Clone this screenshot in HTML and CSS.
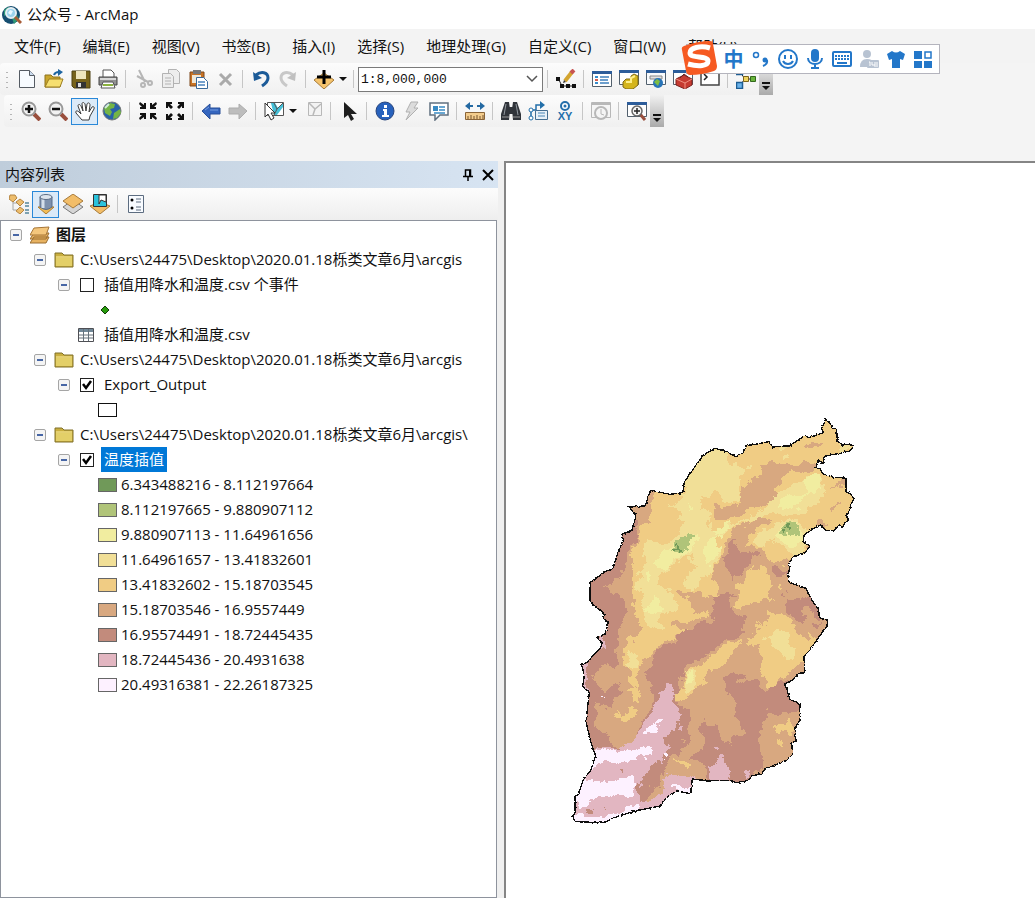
FILE: index.html
```html
<!DOCTYPE html>
<html lang="zh-CN">
<head>
    <meta charset="UTF-8">
    <meta name="viewport" content="width=device-width, initial-scale=1.0">
    <title>公众号 - ArcMap</title>
    <link rel="stylesheet" href="styles.css">
</head>
<body>
    <header class="titlebar">
        <svg class="app-icon" viewBox="0 0 20 20"><circle cx="9" cy="10" r="9" fill="#164e70"/><path d="M2 5l4-3 3 2-2 4-5 3zM10 13l5-3 2 4-5 5z" fill="#2f9a77"/><circle cx="9" cy="8" r="5" fill="#9bd3ec" stroke="#e4eef3" stroke-width="2"/><path d="M6 8l2-3 3 1-2 4z" fill="#e9f8ff"/><path d="M13 12l6 6" stroke="#a75c36" stroke-width="3"/></svg>
        <h1>公众号 - ArcMap</h1>
    </header>

    <nav class="menubar">
        <button>文件(F)</button>
        <button>编辑(E)</button>
        <button>视图(V)</button>
        <button>书签(B)</button>
        <button>插入(I)</button>
        <button>选择(S)</button>
        <button>地理处理(G)</button>
        <button>自定义(C)</button>
        <button>窗口(W)</button>
        <button>帮助(H)</button>
    </nav>

    <div class="toolbars">
        <!-- 标准工具条 -->
        <div class="toolbar">
            <span class="grip"></span>
            <button class="tool" aria-label="新建"><svg viewBox="0 0 20 20"><path d="M2.500 1.500h10l5 5v12h-15z" fill="#f7fbff" stroke="#555b63"/><path d="M12.500 1.500v5h5" fill="#cbdcef" stroke="#555b63"/></svg></button>
            <button class="tool" aria-label="打开"><svg viewBox="0 0 20 20"><path d="M1 18V6h6l2 2h7v10z" fill="#c8a52d" stroke="#8d721d"/><path d="M1 18l4-8h14l-3 8z" fill="#f6df70" stroke="#9b7d20"/><path d="M10 6c1-3 3-3 5-3" fill="none" stroke="#1d64a0" stroke-width="2"/><path d="M14 0l5 3-5 4z" fill="#1d64a0"/></svg></button>
            <button class="tool" aria-label="保存"><svg viewBox="0 0 20 20"><path d="M1 2h18v17H3l-2-2z" fill="#77631b" stroke="#4e4315"/><path d="M5 2h10v8H5z" fill="#eee5bd"/><path d="M5 13h10v6H5z" fill="#333"/><path d="M7 14h3v4H7z" fill="#ddd"/></svg></button>
            <button class="tool" aria-label="打印"><svg viewBox="0 0 20 20"><path d="M5 8V1h8l3 3v4" fill="#fff" stroke="#555"/><path d="M1 8h18v8H1z" fill="#929292" stroke="#444"/><path d="M2 9h16v2H2z" fill="#d8d8d8"/><path d="M5 13h10l2 6H3z" fill="#fff" stroke="#555"/><path d="M5 16h10" stroke="#8bb23e" stroke-width="2"/></svg></button>
            <span class="sep"></span>
            <button class="tool" aria-label="剪切"><svg viewBox="0 0 20 20" fill="none" stroke="#b6b6b6" stroke-width="2"><path d="M5 1l6 12M3 7l11 6"/><circle cx="9" cy="16" r="2"/><circle cx="16" cy="14" r="2"/></svg></button>
            <button class="tool" aria-label="复制"><svg viewBox="0 0 20 20" fill="#ededed" stroke="#b3b3b3"><path d="M7.500.5h8l3 3v11h-11z"/><path d="M1.500 4.500h8l3 3v11h-11z"/><path d="M4 9h6M4 12h6M4 15h6"/></svg></button>
            <button class="tool" aria-label="粘贴"><svg viewBox="0 0 20 20"><path d="M2 3h14v14H2z" fill="#c87324" stroke="#7c481c"/><path d="M5 1h8v4H5z" fill="#777"/><path d="M4 6h9v8H4z" fill="#efe8d8"/><path d="M8.500 8.500h7l4 4v7h-11z" fill="#fff" stroke="#39699a"/><path d="M10 13h7M10 16h7" stroke="#4a82bd" stroke-width="1.500"/></svg></button>
            <button class="tool" aria-label="删除"><svg viewBox="0 0 20 20"><path d="M5 5l11 11M16 5L5 16" stroke="#aaa" stroke-width="3"/></svg></button>
            <span class="sep"></span>
            <button class="tool" aria-label="撤消"><svg viewBox="0 0 20 20"><path d="M5 6c5-4 12-3 12 3 0 4-3 6-6 8" fill="none" stroke="#1c5b98" stroke-width="3"/><path d="M2 3l1 9 8-3z" fill="#1c5b98"/></svg></button>
            <button class="tool" aria-label="恢复"><svg viewBox="0 0 20 20"><path d="M15 6C10 2 3 3 3 9c0 4 3 6 6 8" fill="none" stroke="#c8c8c8" stroke-width="3"/><path d="M18 3l-1 9-8-3z" fill="#c0c0c0"/></svg></button>
            <span class="sep"></span>
            <button class="tool" aria-label="添加数据"><svg viewBox="0 0 20 20"><path d="M0 11l10-7 10 7-10 9z" fill="#f5c36c" stroke="#a67b3a"/><path d="M10 1v14M3 8h14" stroke="#000" stroke-width="3"/></svg></button>
            <button class="drop" aria-label="添加数据选项"></button>
            <span class="sep"></span>
            <select class="scale" aria-label="比例尺">
                <option>1:8,000,000</option>
            </select>
            <span class="sep"></span>
            <button class="tool" aria-label="编辑器"><svg viewBox="0 0 20 20"><path d="M2 9l4 8h12" fill="none" stroke="#222"/><path d="M0 8h4v4H0zM4 15h4v4H4zM10 15h4v4h-4zM16 15h4v4h-4z" fill="#111"/><path d="M9 12l7-9" stroke="#d3a42f" stroke-width="4"/><path d="M15 4l3-3" stroke="#c85453" stroke-width="4"/><path d="M7 14l1-3 2 2z" fill="#333"/></svg></button>
            <span class="sep"></span>
            <button class="tool" aria-label="内容列表窗口"><svg viewBox="0 0 20 20"><path d="M.5 2.500h19v15H.5z" fill="#fff" stroke="#52606d"/><path d="M0 2h20v3H0z" fill="#2d5d9a"/><path d="M3 8h3M3 14h3" stroke="#378dcc" stroke-width="2"/><path d="M3 11h3" stroke="#d65d49" stroke-width="2"/><path d="M8 8h9M8 11h8M8 14h9" stroke="#3e80bd" stroke-width="1.500"/></svg></button>
            <button class="tool" aria-label="目录"><svg viewBox="0 0 20 20"><path d="M.5 1.500h19v14H.5z" fill="#fff" stroke="#52606d"/><path d="M0 1h20v3H0z" fill="#2d5d9a"/><path d="M4 13l3-3h5V7l3-2 4 2v9l-5 4H7l-3-2z" fill="#d4b51d" stroke="#806b16"/><path d="M7 13h5V9l4-2" fill="none" stroke="#fff08a" stroke-width="2"/></svg></button>
            <button class="tool" aria-label="搜索"><svg viewBox="0 0 20 20"><path d="M.5 1.500h19v14H.5z" fill="#f8fafc" stroke="#52606d"/><path d="M0 1h20v3H0z" fill="#2d5d9a"/><path d="M4 7h12v3H4z" fill="#e2e2e2" stroke="#888"/><circle cx="12" cy="14" r="5" fill="#2774b8"/><path d="M8 13l3-3 3 2-2 5z" fill="#7fbd43"/></svg></button>
            <button class="tool" aria-label="ArcToolbox"><svg viewBox="0 0 20 20"><path d="M.5 1.500h19v14H.5z" fill="#fff" stroke="#52606d"/><path d="M0 1h20v3H0z" fill="#2d5d9a"/><path d="M3 10l8-4 8 4v6l-7 4-9-4z" fill="#c63b31" stroke="#7d211c"/><path d="M3 10l9 4 7-4M12 14v6" fill="none" stroke="#ef9282"/><path d="M7 9l4-4 4 3" fill="none" stroke="#622"/></svg></button>
            <button class="tool" aria-label="Python"><svg viewBox="0 0 20 20"><path d="M1 2h18v14H1z" fill="#fff" stroke="#444" stroke-width="1.500"/><path d="M4 5l3 3-3 3" fill="none" stroke="#222" stroke-width="1.500"/></svg></button>
            <span class="sep"></span>
            <button class="tool" aria-label="模型构建器"><svg viewBox="0 0 20 20"><path d="M4 3l5 7-5 6M10 10h8" fill="none" stroke="#222"/><path d="M.5.5h6v5h-6zM.5 13.500h6v6h-6z" fill="#6ab2ea" stroke="#1d5d93" stroke-width="1.500"/><path d="M7.500 7.500h5v5h-5z" fill="#efd35d" stroke="#7b641b"/><path d="M14.500 7.500h5v5h-5z" fill="#69b43c" stroke="#33681c"/></svg></button>
            <button class="overflow" aria-label="工具条选项"></button>
        </div>

        <!-- 工具 -->
        <div class="toolbar tools">
            <span class="grip"></span>
            <button class="tool" aria-label="放大"><svg viewBox="0 0 20 20"><path d="M13 13l6 6" stroke="#9a4f3d" stroke-width="4"/><circle cx="8" cy="8" r="6.500" fill="#f2f2f2" stroke="#999" stroke-width="2"/><path d="M8 4v8M4 8h8" stroke="#111" stroke-width="2.500"/></svg></button>
            <button class="tool" aria-label="缩小"><svg viewBox="0 0 20 20"><path d="M13 13l6 6" stroke="#9a4f3d" stroke-width="4"/><circle cx="8" cy="8" r="6.500" fill="#f2f2f2" stroke="#999" stroke-width="2"/><path d="M4 8h8" stroke="#111" stroke-width="2.500"/></svg></button>
            <button class="tool active" aria-label="平移"><svg viewBox="0 0 20 20"><path d="M7 19L1 12c-1-2 1-3 3-1l2 2-3-8c0-2 2-2 3 0l2 5-1-7c0-2 2-2 3 0l1 7 1-7c1-2 3-1 3 1l-1 7 3-5c1-1 3 0 2 2l-4 7-1 4z" fill="#fff" stroke="#3c3c3c"/></svg></button>
            <button class="tool" aria-label="全图"><svg viewBox="0 0 20 20"><circle cx="10" cy="10" r="9" fill="#2861a8" stroke="#777"/><path d="M2 7l6-5 5 1-1 4-4 1 2 3-2 4-5-3zM12 12l6-4 1 4-4 5-4 1z" fill="#74b445"/><path d="M3 7l4-4" stroke="#d4efd8" stroke-width="2"/></svg></button>
            <span class="sep"></span>
            <button class="tool" aria-label="固定比例放大"><svg viewBox="0 0 20 20" fill="#111"><path d="M2 1l4 3V2h2v6H2V6h2L1 3zM18 1l-4 3V2h-2v6h6V6h-2l3-3zM2 19l4-3v2h2v-6H2v2h2l-3 3zM18 19l-4-3v2h-2v-6h6v2h-2l3 3z"/></svg></button>
            <button class="tool" aria-label="固定比例缩小"><svg viewBox="0 0 20 20" fill="#111"><path d="M1 1h6v2H5l3 3-2 2-3-3v2H1zM19 1h-6v2h2l-3 3 2 2 3-3v2h2zM1 19h6v-2H5l3-3-2-2-3 3v-2H1zM19 19h-6v-2h2l-3-3 2-2 3 3v-2h2z"/></svg></button>
            <span class="sep"></span>
            <button class="tool" aria-label="返回"><svg viewBox="0 0 20 20"><path d="M1 10l8-7v4h10v6H9v5z" fill="#3566bf" stroke="#284e98"/><path d="M4 9l4-3M9 9h8" stroke="#759bdf"/></svg></button>
            <button class="tool" aria-label="前进"><svg viewBox="0 0 20 20"><path d="M19 10l-8-7v4H1v6h10v5z" fill="#bdbdbd" stroke="#adadad"/></svg></button>
            <span class="sep"></span>
            <button class="tool" aria-label="选择要素"><svg viewBox="0 0 20 20"><path d="M3.500 1.500h16v13h-16z" fill="#fff" stroke="#555"/><path d="M7 2h4l3 5 5-5v4l-6 8h-3z" fill="#44bfd7"/><path d="M10 2l3 6 6-6M13 8l-3 6" fill="none" stroke="#555"/><path d="M1 2v14l3-3 3 6 3-2-3-5h4z" fill="#fff" stroke="#333"/></svg></button>
            <button class="drop" aria-label="选择要素选项"></button>
            <button class="tool" aria-label="清除所选要素"><svg viewBox="0 0 20 20"><path d="M5.500 1.500h13v13h-13z" fill="#f3f3f3" stroke="#b8b8b8"/><path d="M6 2l6 6 6-5M12 8l-2 6" fill="none" stroke="#b8b8b8" stroke-width="1.500"/></svg></button>
            <span class="sep"></span>
            <button class="tool" aria-label="选择元素"><svg viewBox="0 0 20 20"><path d="M5 1v16l4-3 3 6 3-2-3-5h6z" fill="#1e1e1e"/></svg></button>
            <span class="sep"></span>
            <button class="tool" aria-label="识别"><svg viewBox="0 0 20 20"><circle cx="10" cy="10" r="9" fill="#2761bc" stroke="#28457d"/><path d="M9 4h3v3H9zM8 8h4v6h2v2H7v-2h2v-4H8z" fill="#fff"/></svg></button>
            <button class="tool" aria-label="超链接"><svg viewBox="0 0 20 20"><path d="M9 1h7l-4 6h4L4 19l4-8H4z" fill="#dcdcdc" stroke="#b0b0b0"/></svg></button>
            <button class="tool" aria-label="HTML 弹出窗口"><svg viewBox="0 0 20 20"><path d="M1 2h18v12h-8l-5 5v-5H1z" fill="#fff" stroke="#607080" stroke-width="1.500"/><path d="M4 5h5v5H4z" fill="#398ac3"/><path d="M10 6h6M10 9h6M5 12h11" stroke="#398ac3" stroke-width="1.500"/></svg></button>
            <span class="sep"></span>
            <button class="tool" aria-label="测量"><svg viewBox="0 0 20 20"><path d="M0 5l5-4v3h10V1l5 4-5 4V6H5v3z" fill="#2469a2"/><path d="M8 3h4v4H8z" fill="#f7f7f7"/><path d="M.5 11.500h19v7H.5z" fill="#f3cc8c" stroke="#8a6437"/><path d="M3 15v3M6 14v4M9 15v3M12 14v4M15 15v3M18 14v4" stroke="#75532d"/></svg></button>
            <span class="sep"></span>
            <button class="tool" aria-label="查找"><svg viewBox="0 0 20 20"><path d="M4 1h4l1 7-1 11H0v-6zM12 1h4l4 12v6h-8L11 8zM7 6h6v7H7z" fill="#30343a"/><path d="M5 3L3 14M15 3l2 11" stroke="#9299a0"/><path d="M1 16h7M12 16h7" stroke="#999"/></svg></button>
            <button class="tool" aria-label="查找路径"><svg viewBox="0 0 20 20"><path d="M3 17V9h5V4h6" fill="none" stroke="#236fa9" stroke-width="1.500"/><path d="M12 0l5 4-5 4z" fill="#236fa9"/><circle cx="3" cy="9" r="2" fill="#fff" stroke="#236fa9"/><circle cx="3" cy="17" r="2" fill="#fff" stroke="#236fa9"/><path d="M7.500 9.500h12v9h-12z" fill="#e8f0f7" stroke="#446d91"/><path d="M10 12h7M10 15h7" stroke="#4b86b6"/></svg></button>
            <button class="tool" aria-label="转到 XY"><svg viewBox="0 0 20 20"><circle cx="10" cy="5" r="4" fill="#fff" stroke="#246fab" stroke-width="2"/><circle cx="10" cy="5" r="1.500" fill="#246fab"/><text class="xy" x="10" y="19" text-anchor="middle">XY</text></svg></button>
            <span class="sep"></span>
            <button class="tool" aria-label="时间滑块"><svg viewBox="0 0 20 20" fill="#f5f5f5" stroke="#b8b8b8"><path d="M.5 1.500h19v15H.5z"/><path d="M1 3h18" stroke-width="2"/><circle cx="10" cy="12" r="6" stroke-width="2"/><path d="M10 8v5l3 1" fill="none"/></svg></button>
            <span class="sep"></span>
            <button class="tool" aria-label="查看器窗口"><svg viewBox="0 0 20 20"><path d="M.5 1.500h19v14H.5z" fill="#fff" stroke="#52606d"/><path d="M0 1h20v3H0z" fill="#2d5d9a"/><path d="M13 13l5 6" stroke="#9a4f3d" stroke-width="3"/><circle cx="10" cy="10" r="5" fill="#f5f5f5" stroke="#666" stroke-width="1.500"/><path d="M10 7v6M7 10h6" stroke="#222" stroke-width="1.500"/></svg></button>
            <button class="overflow" aria-label="工具条选项"></button>
        </div>

        <!-- 输入法状态栏 -->
        <div class="ime">
            <svg class="ime-logo" viewBox="0 0 36 36"><path d="M3 6Q17 1 29 1q3 0 3 3l4 22q0 4-3 5Q21 35 9 35q-3 0-4-4L1 10q-1-3 2-4z" fill="#f65a22"/><path d="M29 8C19 5 9 8 9 13c0 6 18 2 18 8 0 5-9 6-20 3" fill="none" stroke="#fff" stroke-width="5"/></svg>
            <button class="lang">中</button>
            <button aria-label="标点"><svg viewBox="0 0 20 20"><circle cx="5" cy="6" r="2.500" fill="none" stroke="#2377c9" stroke-width="1.500"/><circle cx="14" cy="11" r="2.500" fill="#2377c9"/><path d="M16 11q1 4-4 6" fill="none" stroke="#2377c9" stroke-width="2"/></svg></button>
            <button aria-label="表情"><svg viewBox="0 0 20 20" fill="none" stroke="#2377c9" stroke-width="2"><circle cx="10" cy="10" r="9"/><path d="M7 6v4M13 6v4M5 12c2 4 8 4 10 0"/></svg></button>
            <button aria-label="语音"><svg viewBox="0 0 20 20"><rect x="6" y="0" width="8" height="13" rx="4" fill="#2377c9"/><path d="M3 9c0 8 14 8 14 0M10 15v4M6 19h8" fill="none" stroke="#2377c9" stroke-width="2"/></svg></button>
            <button aria-label="键盘"><svg viewBox="0 0 20 20"><rect x="1" y="3" width="18" height="14" rx="1" fill="#fff" stroke="#2377c9" stroke-width="2"/><path d="M3 7h14M3 10h14" stroke="#2377c9" stroke-width="2" stroke-dasharray="2 1"/><path d="M5 14h10" stroke="#2377c9" stroke-width="2"/></svg></button>
            <button aria-label="账户"><svg viewBox="0 0 20 20"><circle cx="8" cy="5" r="4" fill="#b8c3d2"/><path d="M1 18q0-8 7-8 5 0 6 3v5z" fill="#b8c3d2"/><rect x="8" y="11" width="12" height="8" rx="1" fill="#b8c3d2"/><path d="M10 13h1v4M13 13v3h3v-3M16 16v2M18 13v5" fill="none" stroke="#fff"/></svg></button>
            <button aria-label="皮肤"><svg viewBox="0 0 20 20"><path d="M6 2q4 3 8 0l5 3-2 6-3-1v9H6v-9l-3 1-2-6z" fill="#2377c9"/></svg></button>
            <button aria-label="工具箱"><svg viewBox="0 0 20 20"><path d="M1 2h8v8H1zM1 12h8v7H1zM11 12h8v7h-8z" fill="#2377c9"/><path d="M12 3h6v6h-6z" fill="#fff" stroke="#2377c9" stroke-width="1.500"/></svg></button>
        </div>
    </div>

    <div class="workspace">
        <aside class="toc">
            <div class="toc-header">
                <h2>内容列表</h2>
                <button aria-label="自动隐藏"><svg viewBox="0 0 12 12"><path d="M3.500 7V1h5v6M1 7.500h10M6 8v4" fill="none" stroke="#000" stroke-width="1.500"/><path d="M7 1h2v6H7z"/></svg></button>
                <button aria-label="关闭"><svg viewBox="0 0 12 12"><path d="M1 1l10 10M11 1L1 11" stroke="#000" stroke-width="2"/></svg></button>
            </div>
            <div class="toc-toolbar">
                <button class="tool" aria-label="按绘制顺序列出"><svg viewBox="0 0 20 20"><path d="M4 6v10h7M4 9h7" fill="none" stroke="#a6a6a6"/><path d="M1 1h5l2 3-4 4-4-3zM11 5l4 3-4 4-4-4zM11 13l4 3-4 4-4-3z" fill="#edbd6c" stroke="#b68642"/><path d="M16 9h4M16 12h4M16 16h4M16 19h4" stroke="#55869c" stroke-width="1.500"/></svg></button>
                <button class="tool active" aria-label="按源列出"><svg viewBox="0 0 20 20"><path d="M2 13h16l-8 7z" fill="#f1bd58" stroke="#ad7c30"/><path d="M4 3v10q6 5 12 0V3z" fill="#7e91ad" stroke="#5b6d86"/><path d="M7 4v10" stroke="#d5dfeb" stroke-width="3"/><ellipse cx="10" cy="3" rx="6" ry="2.500" fill="#dce4ed" stroke="#5b6d86"/></svg></button>
                <button class="tool" aria-label="按可见性列出"><svg viewBox="0 0 20 20"><path d="M0 13l10-7 10 7-10 7z" fill="#d5d5d5" stroke="#777"/><path d="M0 7l10-7 10 7-10 7z" fill="#f2bd68" stroke="#a67a3a"/></svg></button>
                <button class="tool" aria-label="按选择列出"><svg viewBox="0 0 20 20"><path d="M0 12l10-4 10 4-10 8z" fill="#f2bd68" stroke="#a67a3a"/><path d="M3.500.5h13v12h-13z" fill="#2bc3dc" stroke="#333"/><path d="M9 1h7v7l-5-2-2 4z" fill="#fff" stroke="#333"/></svg></button>
                <span class="sep"></span>
                <button class="tool" aria-label="选项"><svg viewBox="0 0 20 20"><path d="M2.500 1.500h15v17h-15z" fill="#f8fbff" stroke="#5c6c80"/><circle cx="6" cy="6" r="1.500"/><circle cx="6" cy="14" r="1.500"/><path d="M10 5h5M10 8h5M10 13h5M10 16h5" stroke="#5c6c80"/></svg></button>
            </div>

            <ul class="tree">
                <li>
                    <div class="row">
                        <button class="toggle" aria-label="折叠"></button>
                        <svg class="node-icon" viewBox="0 0 20 18"><path d="M4 11h15l-3 6H0zM4 7h15l-3 6H0z" fill="#e7b261" stroke="#9a6d31"/><path d="M4 2l15-1-3 8H0z" fill="#f4c67c" stroke="#a67536"/></svg>
                        <strong>图层</strong>
                    </div>
                    <ul>
                        <li>
                            <div class="row">
                                <button class="toggle" aria-label="折叠"></button>
                                <svg class="node-icon" viewBox="0 0 20 18"><path d="M1 16V2h7l2 2h9v12z" fill="#c9ae3f" stroke="#80702a"/><path d="M2 7h16v8H2z" fill="#e3cf68"/><path d="M2 6h16" stroke="#fff1a5"/></svg>
                                <span>C:\Users\24475\Desktop\2020.01.18栎类文章6月\arcgis</span>
                            </div>
                            <ul>
                                <li>
                                    <div class="row">
                                        <button class="toggle" aria-label="折叠"></button>
                                        <input type="checkbox" id="events">
                                        <label for="events">插值用降水和温度.csv 个事件</label>
                                    </div>
                                    <div class="row symbol"><svg class="point" viewBox="0 0 14 14"><path d="M7 3l4 4-4 4-4-4z" fill="#279b0b" stroke="#123b08"/></svg></div>
                                </li>
                                <li>
                                    <div class="row table-row">
                                        <svg class="table-icon" viewBox="0 0 16 14"><path d="M.5.5h15v13H.5z" fill="#fff" stroke="#4e4f54"/><path d="M1 1h14v3H1z" fill="#6f8797"/><path d="M1 7h14M1 10h14M5.500 1v12M10.500 1v12" stroke="#65717b"/></svg>
                                        <span>插值用降水和温度.csv</span>
                                    </div>
                                </li>
                            </ul>
                        </li>
                        <li>
                            <div class="row">
                                <button class="toggle" aria-label="折叠"></button>
                                <svg class="node-icon" viewBox="0 0 20 18"><path d="M1 16V2h7l2 2h9v12z" fill="#c9ae3f" stroke="#80702a"/><path d="M2 7h16v8H2z" fill="#e3cf68"/><path d="M2 6h16" stroke="#fff1a5"/></svg>
                                <span>C:\Users\24475\Desktop\2020.01.18栎类文章6月\arcgis</span>
                            </div>
                            <ul>
                                <li>
                                    <div class="row">
                                        <button class="toggle" aria-label="折叠"></button>
                                        <input type="checkbox" id="export" checked>
                                        <label for="export">Export_Output</label>
                                    </div>
                                    <div class="row symbol"><span class="swatch outline"></span></div>
                                </li>
                            </ul>
                        </li>
                        <li>
                            <div class="row">
                                <button class="toggle" aria-label="折叠"></button>
                                <svg class="node-icon" viewBox="0 0 20 18"><path d="M1 16V2h7l2 2h9v12z" fill="#c9ae3f" stroke="#80702a"/><path d="M2 7h16v8H2z" fill="#e3cf68"/><path d="M2 6h16" stroke="#fff1a5"/></svg>
                                <span>C:\Users\24475\Desktop\2020.01.18栎类文章6月\arcgis\</span>
                            </div>
                            <ul>
                                <li>
                                    <div class="row">
                                        <button class="toggle" aria-label="折叠"></button>
                                        <input type="checkbox" id="temperature" checked>
                                        <label for="temperature" class="selected">温度插值</label>
                                    </div>
                                    <div class="row symbol"><span class="swatch t1"></span>6.343488216 - 8.112197664</div>
                                    <div class="row symbol"><span class="swatch t2"></span>8.112197665 - 9.880907112</div>
                                    <div class="row symbol"><span class="swatch t3"></span>9.880907113 - 11.64961656</div>
                                    <div class="row symbol"><span class="swatch t4"></span>11.64961657 - 13.41832601</div>
                                    <div class="row symbol"><span class="swatch t5"></span>13.41832602 - 15.18703545</div>
                                    <div class="row symbol"><span class="swatch t6"></span>15.18703546 - 16.9557449</div>
                                    <div class="row symbol"><span class="swatch t7"></span>16.95574491 - 18.72445435</div>
                                    <div class="row symbol"><span class="swatch t8"></span>18.72445436 - 20.4931638</div>
                                    <div class="row symbol"><span class="swatch t9"></span>20.49316381 - 22.26187325</div>
                                </li>
                            </ul>
                        </li>
                    </ul>
                </li>
            </ul>
        </aside>

        <main class="map-view">
            <svg class="map" viewBox="0 0 930 1290" shape-rendering="crispEdges">
                <defs>
                    <filter id="rough" x="-5%" y="-5%" width="110%" height="110%">
                        <feTurbulence type="fractalNoise" baseFrequency="0.12" numOctaves="2" seed="4" result="noise"/>
                        <feDisplacementMap in="SourceGraphic" in2="noise" scale="8" xChannelSelector="R" yChannelSelector="G"/>
                    </filter>
                    <filter id="wavy" x="0" y="0" width="100%" height="100%">
                        <feTurbulence type="fractalNoise" baseFrequency="0.025" numOctaves="3" seed="9" result="noise"/>
                        <feDisplacementMap in="SourceGraphic" in2="noise" scale="50" xChannelSelector="R" yChannelSelector="G"/>
                    </filter>
                    <path id="border" d="M797 55L815 72 818 82 830 85 832 120 845 132 872 130 881 136 868 150 835 158 793 166 790 187 775 177 768 198 761 200 780 203 788 218 818 228 858 232 858 272 870 278 882 292 872 312 866 335 858 344 866 357 854 366 848 380 838 372 822 388 797 388 783 372 755 386 732 402 730 425 746 432 748 437 735 455 700 468 685 490 690 505 683 520 688 545 738 562 752 592 775 625 778 650 803 658 800 678 775 710 752 745 732 765 734 815 715 818 700 835 672 850 684 866 675 850 690 895 720 910 718 960 705 980 708 1020 695 1025 698 1060 680 1078 650 1090 615 1103 605 1118 575 1125 565 1138 530 1145 510 1138 440 1140 397 1133 392 1178 350 1170 320 1188 300 1215 235 1228 175 1245 130 1265 45 1262 38 1245 45 1235 45 1187 55 1180 70 1135 92 1108 107 1065 90 1015 78 960 88 875 68 855 72 830 68 800 62 790 80 785 122 740 126 726 112 710 135 700 145 665 128 650 136 640 90 603 90 545 100 538 138 510 158 505 172 460 190 415 185 400 215 388 228 345 208 318 255 315 272 268 330 280 368 275 375 240 430 162 465 142 500 152 528 168 548 158 558 135 627 122 638 138 690 134 735 103 745 110 790 95 785 82Z"/>
                    <clipPath id="inside"><use href="#border"/></clipPath>
                </defs>
                <g filter="url(#rough)">
                    <g clip-path="url(#inside)">
                        <g filter="url(#wavy)">
                            <path fill="#d8a880" d="M-50-50h1030v1400H-50z"/>
                            <g fill="#f0cc84">
                                <path d="M285 280L262 350 275 365 235 400 220 460 215 560 222 640 250 680 200 720 190 780 205 840 225 865 240 800 290 740 330 710 395 690 345 680 335 655 380 662 450 645 455 625 400 638 380 600 345 575 350 570 420 585 480 580 460 510 480 470 490 430 525 385 600 350 635 355 560 400 550 430 600 445 610 460 640 490 700 470 760 440 740 400 930 400 930 0 380 0z"/>
                                <path d="M605 495L620 520 640 605 610 600 520 615 530 545 570 510zM630 630L670 640 700 690 775 715 740 780 700 790 660 830 640 865 620 850 600 790 600 740 560 720 575 690 620 665zM500 730L545 720 510 770 480 800 430 845 405 870 350 915 340 890 365 850 365 810 440 780z"/>
                                <path d="M655 965L695 960 705 985 670 1000 650 990zM645 1015L670 1010 670 1035 650 1030zM625 840h25l-8 24-18-8zM155 560l10 2-2 12-12-8zM665 546h10v10h-10z"/>
                            </g>
                            <g fill="#f1df97">
                                <path d="M420 165L465 130 510 165 515 190 570 205 530 265 520 300 490 305 475 265 430 290 435 350 470 390 520 370 600 330 640 280 730 240 760 215 800 260 780 290 730 340 640 335 540 370 480 410 480 450 460 500 430 550 400 575 375 560 370 530 400 490 395 450 320 510 290 520 290 550 320 565 345 600 340 630 310 640 300 690 280 680 255 640 240 570 225 540 260 500 255 430 265 410 300 430 360 400 365 350 330 310 380 270 365 245z"/>
                                <path d="M570 415L650 365 700 350 750 380 740 440 700 460 650 430 600 435zM640 690L690 695 700 760 680 775 640 730 615 715zM210 740L240 765 225 800 200 785zM370 805L405 805 410 860 375 880 368 850zM830 130L900 136 830 165zM665 140l25-8-5 25-22 8z"/>
                            </g>
                            <g fill="#f1eda0">
                                <path d="M740 230L770 215 780 260 735 290 715 325 650 320 680 285 735 285zM345 430L410 395 430 410 395 440 320 500 280 505 300 470zM435 440L480 405 480 445 435 490zM665 375L715 360 735 385 730 430 680 430 650 410zM285 590L310 600 315 630 280 640 255 620zM370 820L395 810 405 835 375 850zM260 515l15 3-5 20-12-5zM470 385l45-20-10 30-25 10zM385 310l12 5-6 14z"/>
                            </g>
                            <path fill="#b0c479" d="M345 430L380 408 408 400 405 415 360 455 342 460zM675 370L720 362 722 400 690 405 665 390z"/>
                            <path fill="#709959" d="M347 443l20-4-5 14-16 4zM670 385l15-12 12 7-12 10z"/>
                            <g fill="#d8a880">
                                <path d="M640 172L690 190 760 190 790 170 780 205 700 210 650 240 640 260 655 285 610 310 520 345 500 360 450 345 455 320 520 315 530 275 600 215 610 190zM725 135L785 118 770 135 740 148 722 140zM815 245L868 233 868 255zM808 308L838 306 830 316 810 316zM770 370L785 360 815 380 800 395z"/>
                            </g>
                            <g fill="#c28b7c">
                                <path d="M235 350L232 400 215 450 195 500 130 560 190 590 195 640 170 690 175 760 170 800 120 800 95 830 130 870 180 850 185 890 150 910 110 930 105 970 145 1000 150 1030 205 1040 250 960 280 890 265 820 290 750 360 705 460 650 470 580 510 580 510 620 560 650 540 700 440 760 365 800 355 850 350 910 395 930 380 1000 365 1050 330 1090 280 1160 240 1195 150 1120 0 1100 0 400z"/>
                                <path d="M490 480L510 420 525 415 530 450 600 465 570 495 520 530 500 500zM635 505L690 500 690 520 650 525zM680 590L735 580 765 605 785 650 740 630 720 670 690 650 675 620zM750 660L780 655 775 680zM665 570l12-3 3 12-10 3z"/>
                                <path d="M500 810L560 810 555 835 595 840 620 870 665 840 690 840 740 910 710 930 630 930 610 950 600 990 605 1010 600 1060 620 1100 530 1170 450 1150 400 1070 430 1030 420 950 460 980 520 1040 525 1000 560 1000 530 960 520 940 540 905 500 880z"/>
                            </g>
                            <path fill="#d8a880" d="M150 555l40-30 20 10-10 45-40 5-30-15zM110 810l25-15 30 20 40-20 10 35-40-5-30 30-30-15zM185 670l25-20 30 20-10 50-40-20zM530 840l30-10-10 30zM100 920l50-5 40-40 70 15-20 60-30 70-30 20-35-20 5-30-50-15z"/>
                            <path fill="#f0cc84" d="M175 930l45-5 2 22-22 15-30-5zM215 865l25 10 5 20-20 10-10-15z"/>
                            <g fill="#e2b6c1">
                                <path d="M315 845L340 870 345 915 362 940 350 1000 300 1010 345 1025 330 1065 280 1090 240 1150 240 1190 290 1190 320 1120 415 1120 415 1200 300 1245 10 1300 10 1180 110 1045 180 1045 230 1000 270 940 300 860zM475 1045L490 1050 510 1130 480 1150 460 1115 440 1100 470 1080zM550 1100L580 1105 560 1148zM105 710h22v30h-22zM60 790h17l5 70H60z"/>
                            </g>
                            <path fill="#c28b7c" d="M295 1010l60-5 12 20-15 25-70 110-40 45-5-20 30-60 50-65 20-30z"/>
                            <path fill="#d8a880" d="M385 1075l25 15 40 40-30 8-100-20-5-25 35-30z"/>
                            <path fill="#f0cc84" d="M345 1080l28 0 18 22-10 6z"/>
                            <g fill="#fdf1ff">
                                <path d="M100 1055L190 1050 270 1035 275 1060 200 1085 130 1090 80 1110zM50 1135L110 1145 235 1125 240 1145 220 1172 150 1190 100 1190 50 1220 30 1190zM255 990L270 970 297 960 290 985 260 1002zM335 1147L360 1152 405 1158 400 1190 340 1175zM20 1240L130 1250 190 1220 240 1215 240 1240 130 1290 20 1290zM130 887h8v8h-8zM313 1068h6v6h-6z"/>
                            </g>
                            <path fill="#c28b7c" d="M75 1220l35-4-3 16-30 3zM134 1218h10v4h-10zM177 1108h6v4h-6z"/>
                        </g>
                    </g>
                    <use href="#border" fill="none" stroke="#080808" stroke-width="4"/>
                </g>
            </svg>
        </main>
    </div>
</body>
</html>
```

FILE: styles.css
```css
* {
    margin: 0;
    padding: 0;
    box-sizing: border-box;
}

body {
    font-family: 'Open Sans', 'Noto Sans CJK SC', sans-serif;
    font-size: 15px;
    line-height: 25px;
    color: #111;
    background-color: #f0f0f0;
    min-height: 100vh;
    display: flex;
    flex-direction: column;
}

button {
    font: inherit;
    color: inherit;
    background: none;
    border: none;
}

svg {
    display: block;
}

ul {
    list-style: none;
}

.titlebar {
    height: 29px;
    padding: 0 2px;
    background-color: #fff;
    display: flex;
    align-items: center;
    gap: 5px;
}

.titlebar h1 {
    font-size: 15px;
    font-weight: normal;
}

.app-icon {
    width: 20px;
    height: 20px;
}

.menubar {
    height: 34px;
    padding: 0 14px;
    background-color: #f3f3f3;
    display: flex;
    align-items: center;
    gap: 22px;
    white-space: nowrap;
}

.toolbars {
    position: relative;
    height: 98px;
    background-color: #f4f4f4;
}

.toolbar {
    width: max-content;
    height: 32px;
    padding-left: 4px;
    border-radius: 4px 0 0 4px;
    background: linear-gradient(#fcfcfc, #f0f0f0);
    display: flex;
    align-items: center;
}

.toolbar.tools {
    margin-left: 4px;
}

.grip {
    width: 9px;
    height: 18px;
    background: radial-gradient(circle, #b5b5b5 1px, transparent 1px) 0 0 / 6px 5px repeat-y;
}

.tool {
    width: 27px;
    height: 27px;
    padding: 3px;
    flex: none;
    display: flex;
    align-items: center;
    justify-content: center;
}

.tool svg {
    width: 20px;
    height: 20px;
    flex: none;
}

.tool.active {
    border: 1px solid #2988d8;
    background-color: #dbeaf8;
}

.xy {
    font-family: 'Liberation Sans', sans-serif;
    font-size: 11px;
    font-weight: bold;
    fill: #246fab;
}

.sep {
    width: 1px;
    height: 18px;
    margin: 0 4px;
    background-color: #c6c6c6;
    flex: none;
}

.drop {
    width: 12px;
    height: 27px;
    display: flex;
    align-items: center;
    justify-content: center;
}

.drop::before {
    content: '';
    border: 4px solid transparent;
    border-top-color: #111;
    border-bottom: none;
}

.scale {
    width: 185px;
    height: 25px;
    padding: 0 2px;
    appearance: none;
    border: 1px solid #7a7a7a;
    border-radius: 0;
    color: #111;
    font-family: 'Liberation Mono', monospace;
    font-size: 13px;
    background: #fff url("data:image/svg+xml,%3Csvg xmlns='http://www.w3.org/2000/svg' width='12' height='8'%3E%3Cpath d='M1 1l5 5 5-5' fill='none' stroke='%23555' stroke-width='1.5'/%3E%3C/svg%3E") no-repeat right 4px center;
}

.overflow {
    align-self: stretch;
    width: 14px;
    background: linear-gradient(#f1f1f1, #aaa);
    display: flex;
    flex-direction: column;
    align-items: center;
    justify-content: flex-end;
    padding-bottom: 5px;
    gap: 2px;
}

.overflow::before {
    content: '';
    width: 8px;
    height: 2px;
    background-color: #111;
}

.overflow::after {
    content: '';
    border: 4px solid transparent;
    border-top-color: #111;
    border-bottom: none;
}

.ime {
    position: absolute;
    left: 686px;
    top: -19px;
    height: 30px;
    padding-left: 33px;
    padding-right: 3px;
    border: 1px solid #b4b4bd;
    background-color: #fff;
    display: flex;
    align-items: center;
}

.ime-logo {
    position: absolute;
    left: -6px;
    top: -5px;
    width: 36px;
    height: 36px;
}

.ime button {
    width: 27px;
    height: 28px;
    display: flex;
    align-items: center;
    justify-content: center;
}

.ime button svg {
    width: 20px;
    height: 20px;
}

.ime .lang {
    font-size: 20px;
    font-weight: bold;
    color: #2377c9;
}

.workspace {
    flex: 1;
    display: flex;
    gap: 6px;
}

.toc {
    width: 498px;
    flex: none;
    display: flex;
    flex-direction: column;
}

.toc-header {
    height: 27px;
    padding: 0 0 0 5px;
    background: linear-gradient(90deg, #bfcddb, #d7e4f2);
    display: flex;
    align-items: center;
}

.toc-header h2 {
    flex: 1;
    font-size: 15px;
    font-weight: normal;
}

.toc-header button {
    width: 20px;
    height: 20px;
    display: flex;
    align-items: center;
    justify-content: center;
}

.toc-header svg {
    width: 12px;
    height: 12px;
}

.toc-toolbar {
    height: 32px;
    padding-left: 5px;
    background: linear-gradient(#fcfcfc, #eee);
    display: flex;
    align-items: center;
}

.tree {
    flex: 1;
    margin-right: 1px;
    padding: 1px 0 0 9px;
    border: 1px solid #8e939d;
    background-color: #fff;
}

.tree ul {
    padding-left: 24px;
}

.row {
    height: 25px;
    display: flex;
    align-items: center;
    white-space: nowrap;
}

.toggle {
    width: 12px;
    height: 12px;
    margin-right: 8px;
    flex: none;
    border: 1px solid #a5a5a5;
    border-radius: 2px;
    background: linear-gradient(#4766a5, #4766a5) center / 6px 2px no-repeat #f4f4f4;
}

.node-icon {
    width: 20px;
    height: 18px;
    margin-right: 6px;
}

.row input {
    width: 14px;
    height: 14px;
    margin: 0 7px 0 2px;
    appearance: none;
    border: 1px solid #222;
    background-color: #fff;
}

.row input:checked {
    background-image: url("data:image/svg+xml,%3Csvg xmlns='http://www.w3.org/2000/svg' viewBox='0 0 12 12'%3E%3Cpath d='M2 5l3 4 5-7' fill='none' stroke='%23000' stroke-width='2.5'/%3E%3C/svg%3E");
}

.row label {
    padding: 0 3px;
}

.row label.selected {
    color: #fff;
    background-color: #0078d7;
}

.symbol {
    padding-left: 40px;
}

.point {
    width: 14px;
    height: 14px;
}

.table-row {
    padding-left: 20px;
}

.table-icon {
    width: 16px;
    height: 14px;
    margin-right: 10px;
}

.swatch {
    width: 19px;
    height: 14px;
    margin-right: 4px;
    border: 1px solid #666;
}

.swatch.outline {
    border-color: #111;
}

.t1 { background-color: #709959; }
.t2 { background-color: #b0c479; }
.t3 { background-color: #f1eda0; }
.t4 { background-color: #f1df97; }
.t5 { background-color: #f0cc84; }
.t6 { background-color: #d8a880; }
.t7 { background-color: #c28b7c; }
.t8 { background-color: #e2b6c1; }
.t9 { background-color: #fdf1ff; }

.map-view {
    flex: 1;
    padding: 238px 0 0 54px;
    border: 2px solid #858585;
    border-right: none;
    border-bottom: none;
    background-color: #fff;
}

.map {
    width: 310px;
    height: 430px;
}
```
